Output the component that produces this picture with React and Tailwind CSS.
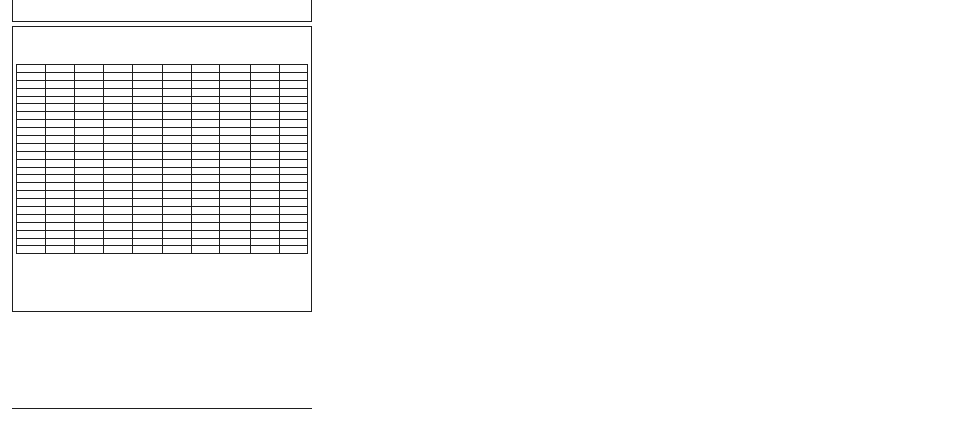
export default function App() {
  const rows = Array.from({ length: 24 });
  const widths = ["w-[29px]", "w-[29px]", "w-[29px]", "w-[29px]", "w-[30px]", "w-[29px]", "w-[28px]", "w-[31px]", "w-[29px]", "w-[28px]"];
  return (
    <div className="w-[954px] h-[447px] bg-white pl-[12px] font-['Liberation_Sans',sans-serif]">
      <div className="w-[300px] h-[22px] border-x border-b border-[#1e1e1e]" />
      <div className="w-[300px] h-[286px] mt-[4px] border border-[#1e1e1e] pt-[37px] pl-[3px]">
        <table className="w-[292px] table-fixed border-collapse">
          <colgroup>
            {widths.map((w, i) => (
              <col key={i} className={w} />
            ))}
          </colgroup>
          <tbody>
            {rows.map((_, r) => (
              <tr key={r} className="h-[7.9px]">
                {widths.map((_, c) => (
                  <td key={c} className="border border-[#1e1e1e] p-0 h-[7.9px]" />
                ))}
              </tr>
            ))}
          </tbody>
        </table>
      </div>
      <div className="w-[300px] mt-[96px] border-t border-[#1e1e1e]" />
    </div>
  );
}
